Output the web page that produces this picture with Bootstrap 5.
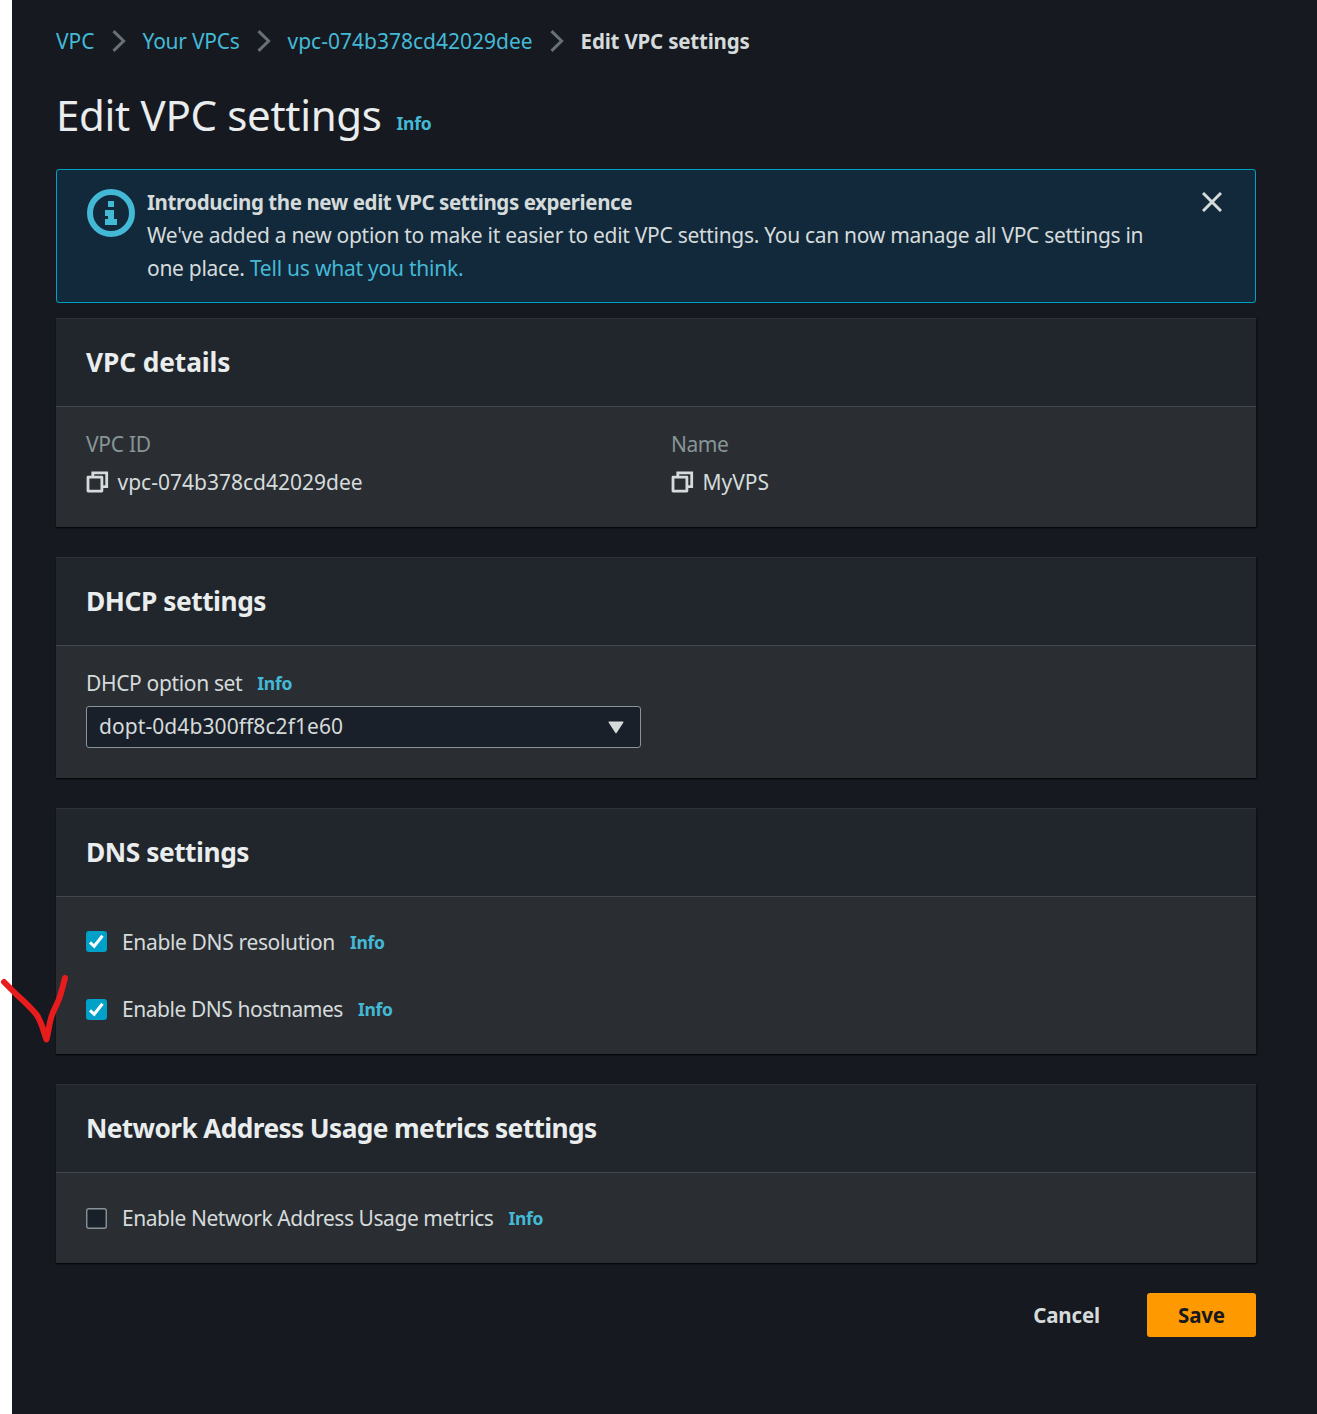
<!DOCTYPE html>
<html lang="en">
<head>
<meta charset="utf-8">
<meta name="viewport" content="width=device-width, initial-scale=1">
<title>Edit VPC settings</title>
<link href="https://cdn.jsdelivr.net/npm/bootstrap@5.3.0/dist/css/bootstrap.min.css" rel="stylesheet">
<style>
body{background:#161920 linear-gradient(90deg,#fff 12px,#161920 12px);color:#d5dbdb;font-family:"Noto Sans","Open Sans",sans-serif;font-size:21px;line-height:33px;min-height:1414px;position:relative}
a{color:#44b9d6;text-decoration:none}
svg{display:block;flex:none}
.shell{width:1200px;margin-left:56px;padding-top:25px}
.crumbs{height:33px;margin-bottom:32px}
.crumbs .breadcrumb-item{padding:0;display:flex;align-items:center;white-space:nowrap}
.crumbs .breadcrumb-item::before{display:none}
.crumbs svg{margin:-2px 17px 0 17px}
.crumbs .active{color:#d5dbdb;font-size:20.5px;font-weight:700;letter-spacing:-.2px}
.page-title{font-size:42px;line-height:50px;color:#eaeded;font-weight:400;letter-spacing:-.32px;margin:0}
.title-row{height:50px;margin-bottom:29px}
.info{font-size:17.5px;font-weight:700;line-height:22px;letter-spacing:-.3px;margin-left:15px;padding-bottom:1px;transform:translateY(-1px)}
.flash{height:134px;border:1px solid #00a1c9;border-radius:3px;background:#12293b;padding:15px 30px;margin-bottom:15px;color:#d5dbdb}
.flash-text{margin:1px 0 0 12px;letter-spacing:-.295px;white-space:nowrap}
.flash-text strong{font-size:20.5px;letter-spacing:-.42px}
.flash-text a{letter-spacing:-.23px}
.flash-icon{margin-top:4px}
.closer{background:none;border:0;padding:0;margin:7px 3px 0 auto}
.panel{background:#2a2e33;border:0;border-radius:0;margin-bottom:30px;box-shadow:0 1px 1px rgba(0,0,0,.6),1px 1px 2px rgba(0,0,0,.4);color:#d5dbdb}
.panel-top{height:89px;background:#21252c;border-top:1px solid #2f3337;border-bottom:1px solid #414750;border-radius:0!important;padding:0 30px 2px}
.panel-top h2{font-size:26.3px;font-weight:700;color:#eaeded;margin:0;line-height:36px}
.panel-main{padding:0 30px}
.h-details{height:120px;padding-top:21px}
.h-dhcp{height:132px;padding-top:21px}
.h-dns{height:157px;padding-top:29px}
.h-nau{height:90px;padding-top:29px}
.key{color:#879596}
.val{margin-top:5px;gap:8px}
.val svg{margin:-2px .5px 0 0}
.col-name{padding-left:15px}
.picker{width:555px;height:42px;border:1px solid #879596;border-radius:3px;background:#1a2029;padding:0 16px 1px 12px;margin-top:6px;color:#d5dbdb;letter-spacing:.08px}
.picker svg{margin-top:2px}
.opt{height:33px;margin-bottom:34px}
.opt .tick{margin:-1px 15px 0 0}
.opt .tick-up{margin-top:-3px}
.n0{letter-spacing:-.1px}
.n2{letter-spacing:-.26px}
.n3{letter-spacing:-.35px}
.n4{letter-spacing:-.45px}
.n6{letter-spacing:-.63px}
.btn-plain,.btn-save{height:44px;font-size:20.5px;font-weight:700;line-height:30px;padding:0 0 1px;border:0;border-radius:3px;letter-spacing:-.15px}
.btn-plain{color:#d5dbdb;margin-right:47px}
.btn-save{background:#ff9900;color:#16191f;width:109px}
.pen{position:absolute;left:0;top:970px;z-index:5;pointer-events:none}
</style>
</head>
<body>
<svg width="0" height="0" class="position-absolute">
<symbol id="chev" viewBox="0 0 14 22"><path d="M1.5 1.2 11.6 11 1.5 20.8" fill="none" stroke="#687078" stroke-width="3"/></symbol>
<symbol id="copy" viewBox="0 0 23 22"><path d="M6.8 6V1.8H20.7V15.7H16.5" fill="none" stroke="#d5dbdb" stroke-width="2.8"/><rect x="2" y="6.2" width="13.9" height="13.9" fill="none" stroke="#d5dbdb" stroke-width="2.8" stroke-linejoin="round"/></symbol>
<symbol id="on" viewBox="0 0 21 21"><rect width="21" height="21" rx="3" fill="#00a1c9"/><path d="M4 11.3 8.2 15.3 16.5 4.8" fill="none" stroke="#fff" stroke-width="3"/></symbol>
<symbol id="off" viewBox="0 0 21 21"><rect x=".75" y=".75" width="19.5" height="19.5" rx="2" fill="#1a2029" stroke="#879596" stroke-width="1.4"/></symbol>
</svg>
<main class="shell">
<nav aria-label="breadcrumb">
<ol class="breadcrumb crumbs flex-nowrap align-items-center">
<li class="breadcrumb-item"><a href="#">VPC</a><svg width="14" height="22"><use href="#chev"/></svg></li>
<li class="breadcrumb-item"><a href="#" class="n2">Your VPCs</a><svg width="14" height="22"><use href="#chev"/></svg></li>
<li class="breadcrumb-item"><a href="#">vpc-074b378cd42029dee</a><svg width="14" height="22"><use href="#chev"/></svg></li>
<li class="breadcrumb-item active">Edit VPC settings</li>
</ol>
</nav>
<div class="title-row d-flex align-items-baseline"><h1 class="page-title">Edit VPC settings</h1><a href="#" class="info">Info</a></div>
<div class="flash d-flex align-items-start" role="alert">
<svg class="flash-icon" width="48" height="48"><circle cx="24" cy="24" r="21" fill="none" stroke="#44b9d6" stroke-width="6"/><path d="M21 12h6v6h-6zM18 21h9v9h3v6H18v-6h3v-3h-3z" fill="#44b9d6"/></svg>
<div class="flash-text"><strong>Introducing the new edit VPC settings experience</strong><br>We've added a new option to make it easier to edit VPC settings. You can now manage all VPC settings in<br>one place. <a href="#">Tell us what you think.</a></div>
<button class="closer" aria-label="Close"><svg width="20" height="20"><path d="M1 1 19 19M19 1 1 19" stroke="#d5dbdb" stroke-width="3"/></svg></button>
</div>

<section class="card panel">
<div class="card-header panel-top d-flex align-items-center"><h2 class="n0">VPC details</h2></div>
<div class="panel-main h-details d-flex">
<div class="col-6 pe-3"><div class="key n2">VPC ID</div><div class="val d-flex align-items-center"><svg width="23" height="22"><use href="#copy"/></svg>vpc-074b378cd42029dee</div></div>
<div class="col-6 col-name"><div class="key n4">Name</div><div class="val d-flex align-items-center"><svg width="23" height="22"><use href="#copy"/></svg>MyVPS</div></div>
</div>
</section>

<section class="card panel">
<div class="card-header panel-top d-flex align-items-center"><h2 class="n4">DHCP settings</h2></div>
<div class="panel-main h-dhcp">
<div class="d-flex align-items-baseline"><span class="n3">DHCP option set</span><a href="#" class="info">Info</a></div>
<div class="picker d-flex align-items-center justify-content-between"><span>dopt-0d4b300ff8c2f1e60</span><svg width="16" height="13"><path d="M1.2 1.2H14.8L8 11.6Z" fill="#d5dbdb" stroke="#d5dbdb" stroke-width="1.4" stroke-linejoin="round"/></svg></div>
</div>
</section>

<section class="card panel">
<div class="card-header panel-top d-flex align-items-center"><h2 class="n4">DNS settings</h2></div>
<div class="panel-main h-dns">
<div class="opt d-flex align-items-center"><svg class="tick tick-up" width="21" height="21"><use href="#on"/></svg><div class="d-flex align-items-baseline"><span class="n3">Enable DNS resolution</span><a href="#" class="info">Info</a></div></div>
<div class="opt d-flex align-items-center"><svg class="tick" width="21" height="21"><use href="#on"/></svg><div class="d-flex align-items-baseline"><span class="n4">Enable DNS hostnames</span><a href="#" class="info">Info</a></div></div>
</div>
</section>

<section class="card panel">
<div class="card-header panel-top d-flex align-items-center"><h2 class="n6">Network Address Usage metrics settings</h2></div>
<div class="panel-main h-nau">
<div class="opt d-flex align-items-center"><svg class="tick" width="21" height="21"><use href="#off"/></svg><div class="d-flex align-items-baseline"><span class="n4">Enable Network Address Usage metrics</span><a href="#" class="info">Info</a></div></div>
</div>
</section>

<div class="d-flex justify-content-end"><button class="btn btn-plain">Cancel</button><button class="btn btn-save">Save</button></div>
</main>
<svg class="pen" width="80" height="80"><path d="M4 12C9 17 13 21 17 25C26 33 31 38 36 44C41 50 43 60 46.5 69.5C49 60 49 53 52 45C54 39 58 33 60 26C62 20 63.5 14 65 8" fill="none" stroke="#e81c1c" stroke-width="6" stroke-linecap="round" stroke-linejoin="round"/></svg>
<script src="https://cdn.jsdelivr.net/npm/bootstrap@5.3.0/dist/js/bootstrap.bundle.min.js"></script>
</body>
</html>
